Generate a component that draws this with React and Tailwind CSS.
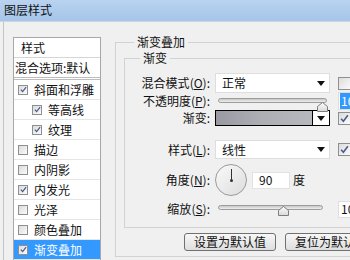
import React from 'react';

const items = [
  { label: '斜面和浮雕', checked: true },
  { label: '等高线', checked: true, indent: true },
  { label: '纹理', checked: true, indent: true },
  { label: '描边' },
  { label: '内阴影' },
  { label: '内发光', checked: true },
  { label: '光泽' },
  { label: '颜色叠加' },
  { label: '渐变叠加', checked: true, active: true },
];

const Check = ({ checked, big }) => (
  <span
    className={`flex items-center justify-center shrink-0 border border-[#8e8f8f] bg-gradient-to-br from-[#dcdcdc] to-[#fbfbfb] ${
      big ? 'w-[13px] h-[13px]' : 'w-[10px] h-[10px]'
    }`}
  >
    {checked && (
      <svg width={big ? 9 : 7} height={big ? 9 : 7} viewBox="0 0 8 8">
        <path d="M1 4.2 L3 6.4 L7 1.2" fill="none" stroke="#4a5a8c" strokeWidth="1.4" />
      </svg>
    )}
  </span>
);

const Arrow = () => (
  <svg width="8" height="5" viewBox="0 0 8 5">
    <path d="M0 0 H8 L4 5 Z" fill="#111" />
  </svg>
);

const Slider = ({ width, thumb, top }) => (
  <div className={`relative h-[16px] ml-[3px] ${width}`}>
    <div className={`absolute left-0 right-0 h-[5px] rounded-full border border-[#9c9c9c] bg-gradient-to-b from-[#c8c8c8] to-[#eeeeee] ${top}`} />
    <svg className={`absolute ${thumb}`} width="11" height="10" viewBox="0 0 11 10">
      <defs>
        <linearGradient id="tg" x1="0" y1="0" x2="0" y2="1">
          <stop offset="0" stopColor="#ffffff" />
          <stop offset="1" stopColor="#d8d8d8" />
        </linearGradient>
      </defs>
      <path d="M5.5 0.5 L10.5 4.5 L10.5 9.5 L0.5 9.5 L0.5 4.5 Z" fill="url(#tg)" stroke="#7d7d7d" />
    </svg>
  </div>
);

const Label = ({ text, k }) => (
  <span className="w-[85px] mr-[5px] text-right shrink-0">
    {text}
    {k && (
      <>
        (<u>{k}</u>):
      </>
    )}
    {!k && ':'}
  </span>
);

const App = () => {
  return (
    <div className="w-[350px] h-[260px] overflow-hidden bg-[#f0f0f0] text-[12px] leading-[16px] text-[#111] font-['Noto_Sans_CJK_SC','Liberation_Sans',sans-serif]">
      <div className="h-[22px] bg-gradient-to-b from-[#b9d3f0] to-[#a6c5e9] border-b border-[#c9d6e4] pl-[4px] pt-[2px]">
        图层样式
      </div>

      <div className="flex h-[238px] ml-[3px] border-l border-[#c4c4c4]">
        {/* left list */}
        <div className="ml-[9px] mt-[15px] w-[88px] shrink-0 self-start border border-[#a7a7a7] bg-white">
          <div className="h-[20px] pl-[7px] flex items-center border-b border-[#d6d6d6]">样式</div>
          <div className="h-[22px] pl-[1px] flex items-center border-b-[3px] border-double border-[#bdbdbd] whitespace-nowrap">
            混合选项:默认
          </div>
          {items.map((it) => (
            <div
              key={it.label}
              className={`h-[20px] flex items-center gap-[6px] border-b border-[#e6e6e6] ${
                it.indent ? 'pl-[18px]' : 'pl-[4px]'
              } ${it.active ? 'bg-[#3399ff] text-white' : ''}`}
            >
              <Check checked={it.checked} />
              <span>{it.label}</span>
            </div>
          ))}
        </div>

        {/* right panel */}
        <fieldset className="ml-[14px] mt-[12px] w-[280px] shrink-0 border border-[#d2d2d2] pb-[5px] self-start">
          <legend className="ml-[18px] px-[3px] leading-[16px]">渐变叠加</legend>
          <fieldset className="ml-[8px] w-[262px] border border-[#d2d2d2] pb-[10px]">
            <legend className="ml-[15px] px-[3px] leading-[16px]">渐变</legend>

            <div className="mt-[7px] h-[20px] flex items-center">
              <Label text="混合模式" k="O" />
              <div className="w-[115px] h-[20px] bg-white border border-[#dedede] flex items-center justify-between pl-[6px] pr-[4px]">
                <span>正常</span>
                <Arrow />
              </div>
              <span className="ml-[8px]">
                <Check big />
              </span>
            </div>

            <div className="h-[16px] flex items-center">
              <Label text="不透明度" k="P" />
              <Slider width="w-[109px]" thumb="top-[9px] left-[99px]" top="top-[5px]" />
              <div className="ml-[11px] w-[34px] h-[18px] bg-white border border-[#dedede] flex items-center pl-[1px]">
                <span className="bg-[#3399ff] text-white px-[1px]">100</span>
              </div>
            </div>

            <div className="mt-[1px] h-[16px] flex items-center">
              <Label text="渐变" />
              <div className="w-[98px] h-[16px] border border-black bg-gradient-to-r from-[#9a9aa3] via-[#aeaeb5] to-[#b7b7be]" />
              <div className="w-[17px] h-[16px] border border-l-0 border-black bg-white flex items-center justify-center">
                <Arrow />
              </div>
              <span className="ml-[8px]">
                <Check big checked />
              </span>
            </div>

            <div className="mt-[14px] h-[19px] flex items-center">
              <Label text="样式" k="L" />
              <div className="w-[115px] h-[19px] bg-white border border-[#dedede] flex items-center justify-between pl-[6px] pr-[4px]">
                <span>线性</span>
                <Arrow />
              </div>
              <span className="ml-[8px]">
                <Check big checked />
              </span>
            </div>

            <div className="mt-[5px] h-[32px] flex items-center">
              <Label text="角度" k="N" />
              <div className="relative w-[32px] h-[32px] rounded-full border border-[#9a9a9a] bg-gradient-to-br from-[#fafafa] to-[#dcdcdc]">
                <div className="absolute left-[15px] top-[4px] w-[1px] h-[11px] bg-[#333]" />
                <div className="absolute left-[14px] top-[14px] w-[3px] h-[3px] rounded-full bg-[#333]" />
              </div>
              <div className="ml-[5px] w-[38px] h-[17px] bg-white border border-[#e2e2e2] flex items-center pl-[6px]">90</div>
              <span className="ml-[3px]">度</span>
            </div>

            <div className="mt-[5px] h-[16px] flex items-center">
              <Label text="缩放" k="S" />
              <Slider width="w-[105px]" thumb="top-[5px] left-[60px]" top="top-[4px]" />
              <div className="ml-[15px] w-[34px] h-[17px] bg-white border border-[#dedede] flex items-center pl-[2px]">100</div>
            </div>
          </fieldset>

          <div className="mt-[5px] pl-[68px] flex gap-[9px]">
            <button className="w-[92px] h-[18px] shrink-0 border border-[#707070] rounded-[3px] bg-gradient-to-b from-[#f7f7f7] to-[#dedede] leading-[16px]">
              设置为默认值
            </button>
            <button className="w-[92px] h-[18px] shrink-0 border border-[#707070] rounded-[3px] bg-gradient-to-b from-[#f7f7f7] to-[#dedede] leading-[16px]">
              复位为默认值
            </button>
          </div>
        </fieldset>
      </div>
    </div>
  );
};

export default App;
